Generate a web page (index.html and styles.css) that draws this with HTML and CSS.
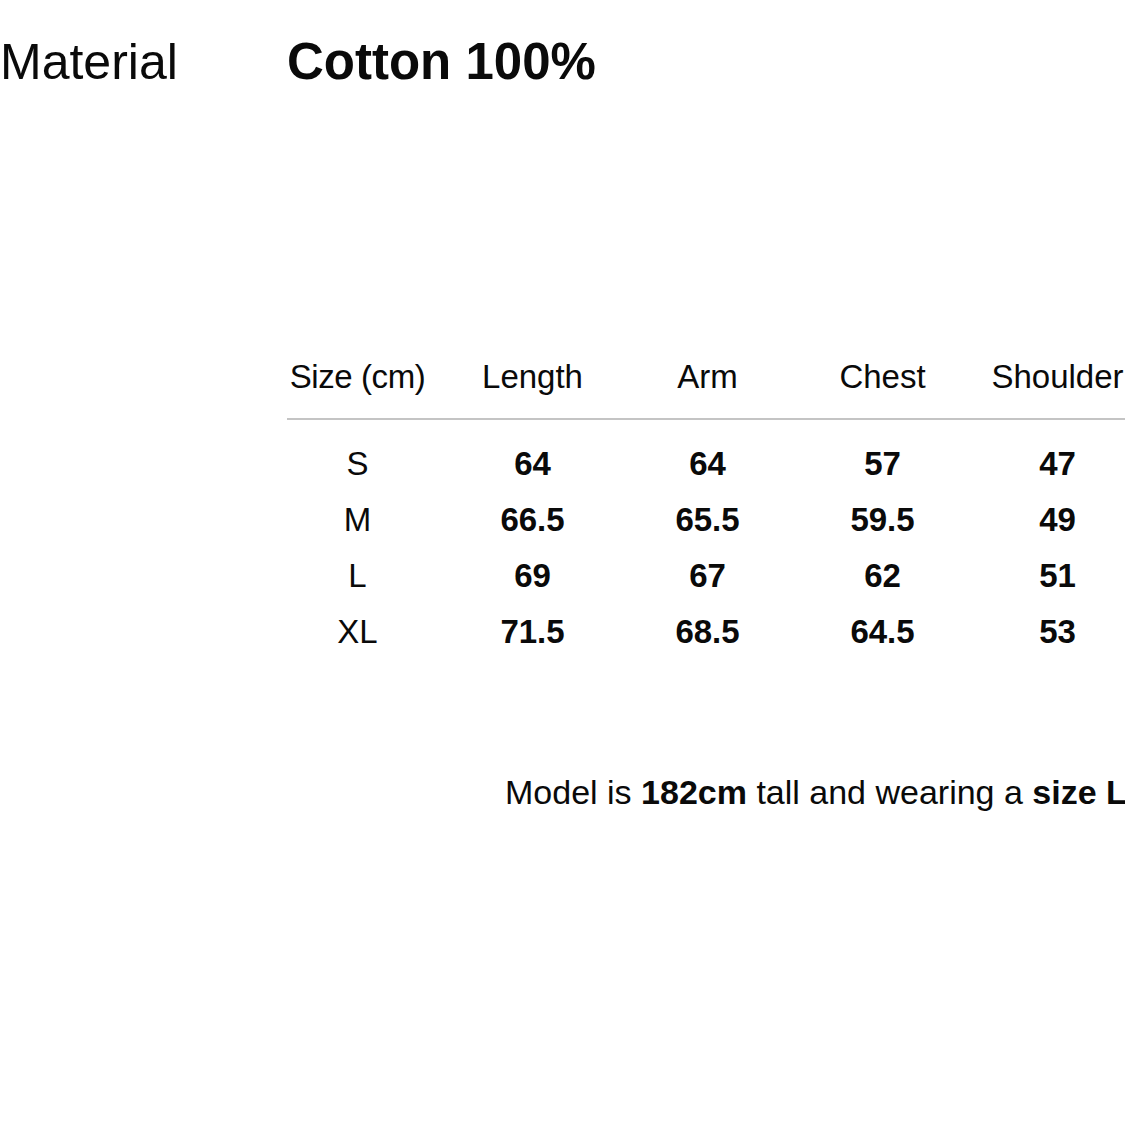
FILE: index.html
```html
<!DOCTYPE html>
<html lang="en">
<head>
<meta charset="utf-8">
<title>Size guide</title>
<link rel="stylesheet" href="styles.css">
</head>
<body>
<div class="page">
  <div class="material">
    <span class="material-label">Material</span>
    <span class="material-value">Cotton 100%</span>
  </div>

  <div class="size-table">
    <div class="row head">
      <div class="cell first">Size (cm)</div>
      <div class="cell">Length</div>
      <div class="cell">Arm</div>
      <div class="cell">Chest</div>
      <div class="cell">Shoulder</div>
    </div>
    <div class="divider"></div>
    <div class="row body">
      <div class="cell size">S</div>
      <div class="cell">64</div>
      <div class="cell">64</div>
      <div class="cell">57</div>
      <div class="cell">47</div>
    </div>
    <div class="row body">
      <div class="cell size">M</div>
      <div class="cell">66.5</div>
      <div class="cell">65.5</div>
      <div class="cell">59.5</div>
      <div class="cell">49</div>
    </div>
    <div class="row body">
      <div class="cell size">L</div>
      <div class="cell">69</div>
      <div class="cell">67</div>
      <div class="cell">62</div>
      <div class="cell">51</div>
    </div>
    <div class="row body">
      <div class="cell size">XL</div>
      <div class="cell">71.5</div>
      <div class="cell">68.5</div>
      <div class="cell">64.5</div>
      <div class="cell">53</div>
    </div>
  </div>

  <p class="model">Model is <b>182cm</b> tall and wearing a <b>size L</b></p>
</div>
</body>
</html>
```

FILE: styles.css
```css
html, body {
  margin: 0;
  padding: 0;
  background: #ffffff;
}

body {
  font-family: "Liberation Sans", Arial, Helvetica, sans-serif;
  color: #0a0a0a;
  overflow: hidden;
}

.page {
  width: 1125px;
  height: 1125px;
  overflow: hidden;
  white-space: nowrap;
}

.material {
  display: flex;
  align-items: baseline;
  padding-top: 32px;
  font-size: 50px;
  line-height: 60px;
}

.material-label {
  width: 287px;
  flex: none;
}

.material-value {
  font-weight: 700;
  font-size: 51px;
}

.size-table {
  margin-top: 265px;
  margin-left: 270px;
  width: 875px;
}

.row {
  display: grid;
  grid-template-columns: repeat(5, 175px);
  font-size: 33px;
  text-align: center;
}

.row.head {
  line-height: 40px;
}

.row.head .first {
  letter-spacing: -0.4px;
}

.divider {
  margin-top: 21px;
  margin-left: 17px;
  height: 2px;
  background: #c4c4c4;
  margin-bottom: 16px;
}

.row.body {
  line-height: 56px;
  font-weight: 700;
}

.row.body .size {
  font-weight: 400;
}

.model {
  margin: 112px 0 0 505px;
  font-size: 34px;
  line-height: 40px;
}

.model b {
  font-weight: 700;
}
```
